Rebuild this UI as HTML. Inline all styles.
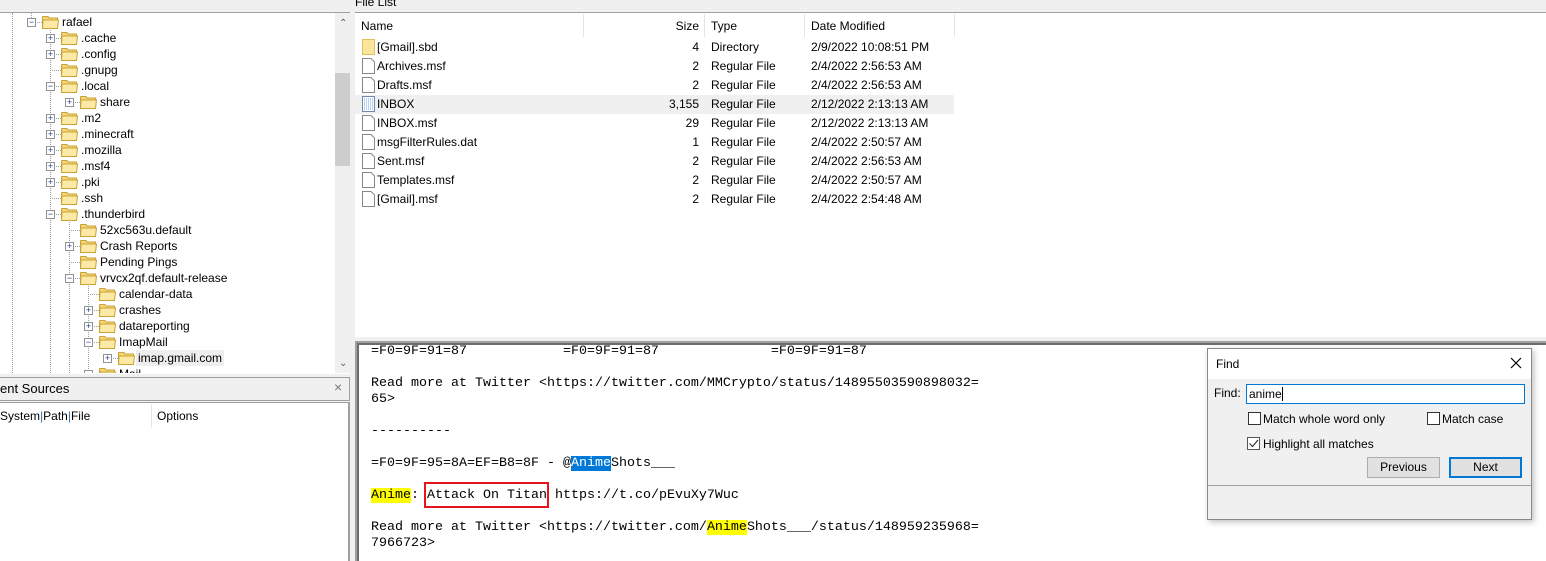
<!DOCTYPE html>
<html><head><meta charset="utf-8">
<style>
*{margin:0;padding:0;box-sizing:border-box}
body{width:1546px;height:561px;overflow:hidden;background:#f0f0f0;font-family:"Liberation Sans",sans-serif;font-size:12px;color:#000;position:relative}
.a{position:absolute;white-space:nowrap}
.tr{position:absolute;height:16px;line-height:16px;white-space:nowrap}
.pm{position:absolute;width:9px;height:9px;border:1px solid #919191;background:#fff;font-size:9px;line-height:7px;text-align:center;color:#1c3f94}
.fold{position:absolute;width:17px;height:13px}
.mono{font-family:"Liberation Mono",monospace;font-size:13.33px;line-height:16px;white-space:pre}
.y{background:#ffff00}
.b{background:#0078d7;color:#fff}
.cb{position:absolute;width:13px;height:13px;border:1px solid #333;background:#fff}
.btn{position:absolute;height:21px;background:#e1e1e1;border:1px solid #adadad;text-align:center;line-height:19px}
.fr{position:absolute;height:19px;line-height:19px;white-space:nowrap}
</style></head><body>

<div class="a" style="left:0;top:12px;width:350px;height:362px;background:#fff;border-top:1px solid #a0a0a0"></div>
<div class="a" style="left:335px;top:13px;width:15px;height:360px;background:#f0f0f0"></div>
<div class="a" style="left:335px;top:73px;width:15px;height:93px;background:#cdcdcd"></div>
<div class="a" style="left:339px;top:18px;font-size:10px;color:#606060">&#8963;</div>
<div class="a" style="left:339px;top:358px;font-size:10px;color:#606060">&#8964;</div>
<div class="a" style="left:12px;top:13px;height:360px;border-left:1px dotted #a0a0a0"></div>
<div class="a" style="left:31px;top:13px;height:9px;border-left:1px dotted #a0a0a0"></div>
<div class="a" style="left:50px;top:30px;height:343px;border-left:1px dotted #a0a0a0"></div>
<div class="a" style="left:69px;top:222px;height:151px;border-left:1px dotted #a0a0a0"></div>
<div class="a" style="left:88px;top:286px;height:87px;border-left:1px dotted #a0a0a0"></div>

<div id="tree"></div>
<script>
var rows=[
[0,'rafael','-'],[1,'.cache','+'],[1,'.config','+'],[1,'.gnupg',''],[1,'.local','-'],[2,'share','+'],
[1,'.m2','+'],[1,'.minecraft','+'],[1,'.mozilla','+'],[1,'.msf4','+'],[1,'.pki','+'],[1,'.ssh',''],
[1,'.thunderbird','-'],[2,'52xc563u.default',''],[2,'Crash Reports','+'],[2,'Pending Pings',''],
[2,'vrvcx2qf.default-release','-'],[3,'calendar-data',''],[3,'crashes','+'],[3,'datareporting','+'],
[3,'ImapMail','-'],[4,'imap.gmail.com','+'],[3,'Mail','-']];
var h='';
var fold='<svg viewBox="0 0 17 13" width="17" height="13"><path d="M0.5 2.5 L0.5 1 Q0.5 0.5 1 0.5 L6 0.5 L7 2 L15.5 2 L15.5 12.5 L0.5 12.5 Z" fill="#f6d67a" stroke="#c8a233"/><path d="M1 4 L16.5 4 L15.5 12.5 L0.5 12.5 Z" fill="#fde9a6" stroke="#c8a233"/></svg>';
rows.forEach(function(r,i){
 var y=14+i*16, L=r[0];
 var px=27+L*19;
 if(y>370)return;
 var clip=(y+16>373)?'height:'+(373-y)+'px;overflow:hidden;':'';
 h+='<div class="tr" style="left:0;top:'+y+'px;width:335px;'+clip+'">';
 h+='<div class="a" style="left:'+(px+4)+'px;top:8px;width:11px;border-top:1px dotted #a0a0a0"></div>';
 if(r[2])h+='<div class="pm" style="left:'+px+'px;top:4px">'+(r[2]=='+'?'+':'&minus;')+'</div>';
 h+='<div class="fold" style="left:'+(px+15)+'px;top:2px">'+fold+'</div>';
 var sel=r[1]=='imap.gmail.com'?'background:#eeeeee;padding:0 2px;margin-left:-2px;':'';
 h+='<div class="a" style="left:'+(px+35)+'px;top:0;'+sel+'">'+r[1]+'</div></div>';
});
document.getElementById('tree').innerHTML=h;
</script>

<div class="a" style="left:0;top:377px;width:350px;height:24px;background:#f0f0f0;border:1px solid #a0a0a0;border-left:none"></div>
<div class="a" style="left:0;top:381px;font-size:13px">ent Sources</div>
<div class="a" style="left:334px;top:379px;font-size:14px;color:#777">&#215;</div>
<div class="a" style="left:0;top:402px;width:350px;height:159px;background:#fff;border-right:2px solid #a0a0a0;border-top:1px solid #a0a0a0"></div>
<div class="a" style="left:0;top:409px">System<span style="color:#3a6fb0">|</span>Path<span style="color:#3a6fb0">|</span>File</div>
<div class="a" style="left:151px;top:404px;height:24px;border-left:1px solid #e5e5e5"></div>
<div class="a" style="left:157px;top:409px">Options</div>

<div class="a" style="left:355px;top:-5px;font-size:12px">File List</div>
<div class="a" style="left:355px;top:12px;width:1191px;height:325px;background:#fff;border-top:1px solid #a0a0a0"></div>
<div class="a" style="left:361px;top:19px">Name</div>
<div class="a" style="left:583px;top:14px;height:23px;border-left:1px solid #e5e5e5"></div>
<div class="a" style="left:600px;top:19px;width:99px;text-align:right">Size</div>
<div class="a" style="left:704px;top:14px;height:23px;border-left:1px solid #e5e5e5"></div>
<div class="a" style="left:711px;top:19px">Type</div>
<div class="a" style="left:804px;top:14px;height:23px;border-left:1px solid #e5e5e5"></div>
<div class="a" style="left:811px;top:19px">Date Modified</div>
<div class="a" style="left:954px;top:14px;height:23px;border-left:1px solid #e5e5e5"></div>
<div id="fl"></div>
<script>
var f=[['[Gmail].sbd','4','Directory','2/9/2022 10:08:51 PM','d'],['Archives.msf','2','Regular File','2/4/2022 2:56:53 AM'],
['Drafts.msf','2','Regular File','2/4/2022 2:56:53 AM'],['INBOX','3,155','Regular File','2/12/2022 2:13:13 AM','i'],
['INBOX.msf','29','Regular File','2/12/2022 2:13:13 AM'],['msgFilterRules.dat','1','Regular File','2/4/2022 2:50:57 AM'],
['Sent.msf','2','Regular File','2/4/2022 2:56:53 AM'],['Templates.msf','2','Regular File','2/4/2022 2:50:57 AM'],
['[Gmail].msf','2','Regular File','2/4/2022 2:54:48 AM']];
var g='';
f.forEach(function(r,i){
 var y=38+i*19;
 var bg=r[4]=='i'?'background:#f0f0f0;':'';
 g+='<div class="fr" style="left:355px;top:'+y+'px;width:599px;'+bg+'">';
 var ic;
 if(r[4]=='d')ic='<svg width="14" height="16"><rect x="0.5" y="0.5" width="12" height="15" fill="#fbe59a" stroke="#e0c060"/></svg>';
 else if(r[4]=='i')ic='<svg width="14" height="16"><rect x="0.5" y="0.5" width="12" height="15" fill="#fff" stroke="#6a8ab8"/><path d="M2 3h9M2 5h9M2 7h9M2 9h9M2 11h9M2 13h9" stroke="#7aa0d8" stroke-dasharray="1 1"/></svg>';
 else ic='<svg width="14" height="16"><path d="M0.5 0.5 H9 L12.5 4 V15.5 H0.5 Z" fill="#fff" stroke="#888"/></svg>';
 g+='<div class="a" style="left:7px;top:1px">'+ic+'</div>';
 g+='<div class="a" style="left:22px;top:0">'+r[0]+'</div>';
 g+='<div class="a" style="left:245px;top:0;width:99px;text-align:right">'+r[1]+'</div>';
 g+='<div class="a" style="left:356px;top:0">'+r[2]+'</div>';
 g+='<div class="a" style="left:456px;top:0">'+r[3]+'</div></div>';
});
document.getElementById('fl').innerHTML=g;
</script>

<div class="a" style="left:355px;top:341px;width:1191px;height:220px;background:#fff;border-left:2px solid #a0a0a0;border-top:2px solid #a0a0a0;box-shadow:inset 2px 2px 0 #6d6d6d"></div>
<div class="a mono" style="left:371px;top:344px">=F0=9F=91=87            =F0=9F=91=87              =F0=9F=91=87

Read more at Twitter &lt;https://twitter.com/MMCrypto/status/14895503590898032=
65&gt;

----------

=F0=9F=95=8A=EF=B8=8F - @<span class="b">Anime</span>Shots___

<span class="y">Anime</span>: Attack On Titan https://t.co/pEvuXy7Wuc

Read more at Twitter &lt;https://twitter.com/<span class="y">Anime</span>Shots___/status/148959235968=
7966723&gt;</div>
<div class="a" style="left:424px;top:482px;width:125px;height:26px;border:2px solid #e8141b"></div>

<div class="a" style="left:1207px;top:348px;width:325px;height:172px;background:#f0f0f0;border:1px solid #888;box-shadow:2px 2px 6px rgba(0,0,0,0.25)"></div>
<div class="a" style="left:1208px;top:349px;width:323px;height:30px;background:#fff"></div>
<div class="a" style="left:1216px;top:357px;font-size:12px">Find</div>
<svg class="a" style="left:1510px;top:357px" width="12" height="12"><path d="M1 1L11 11M11 1L1 11" stroke="#000" stroke-width="1.2"/></svg>
<div class="a" style="left:1214px;top:386px">Find:</div>
<div class="a" style="left:1246px;top:384px;width:279px;height:20px;background:#fff;border:1px solid #0078d7;padding-left:2px;line-height:18px">anime<span style="border-left:1px solid #000"></span></div>
<div class="cb" style="left:1248px;top:412px"></div>
<div class="a" style="left:1263px;top:412px">Match whole word only</div>
<div class="cb" style="left:1427px;top:412px"></div>
<div class="a" style="left:1442px;top:412px">Match case</div>
<div class="cb" style="left:1247px;top:437px;border-color:#555"><svg width="11" height="11" style="position:absolute;left:0;top:0"><path d="M1.5 5.5L4.5 8.5L10 2" stroke="#333" fill="none" stroke-width="1.2"/></svg></div>
<div class="a" style="left:1263px;top:437px">Highlight all matches</div>
<div class="btn" style="left:1367px;top:457px;width:73px">Previous</div>
<div class="btn" style="left:1449px;top:457px;width:73px;border:2px solid #0078d7;line-height:17px">Next</div>
<div class="a" style="left:1208px;top:485px;width:323px;border-top:1px solid #a0a0a0"></div>
</body></html>
